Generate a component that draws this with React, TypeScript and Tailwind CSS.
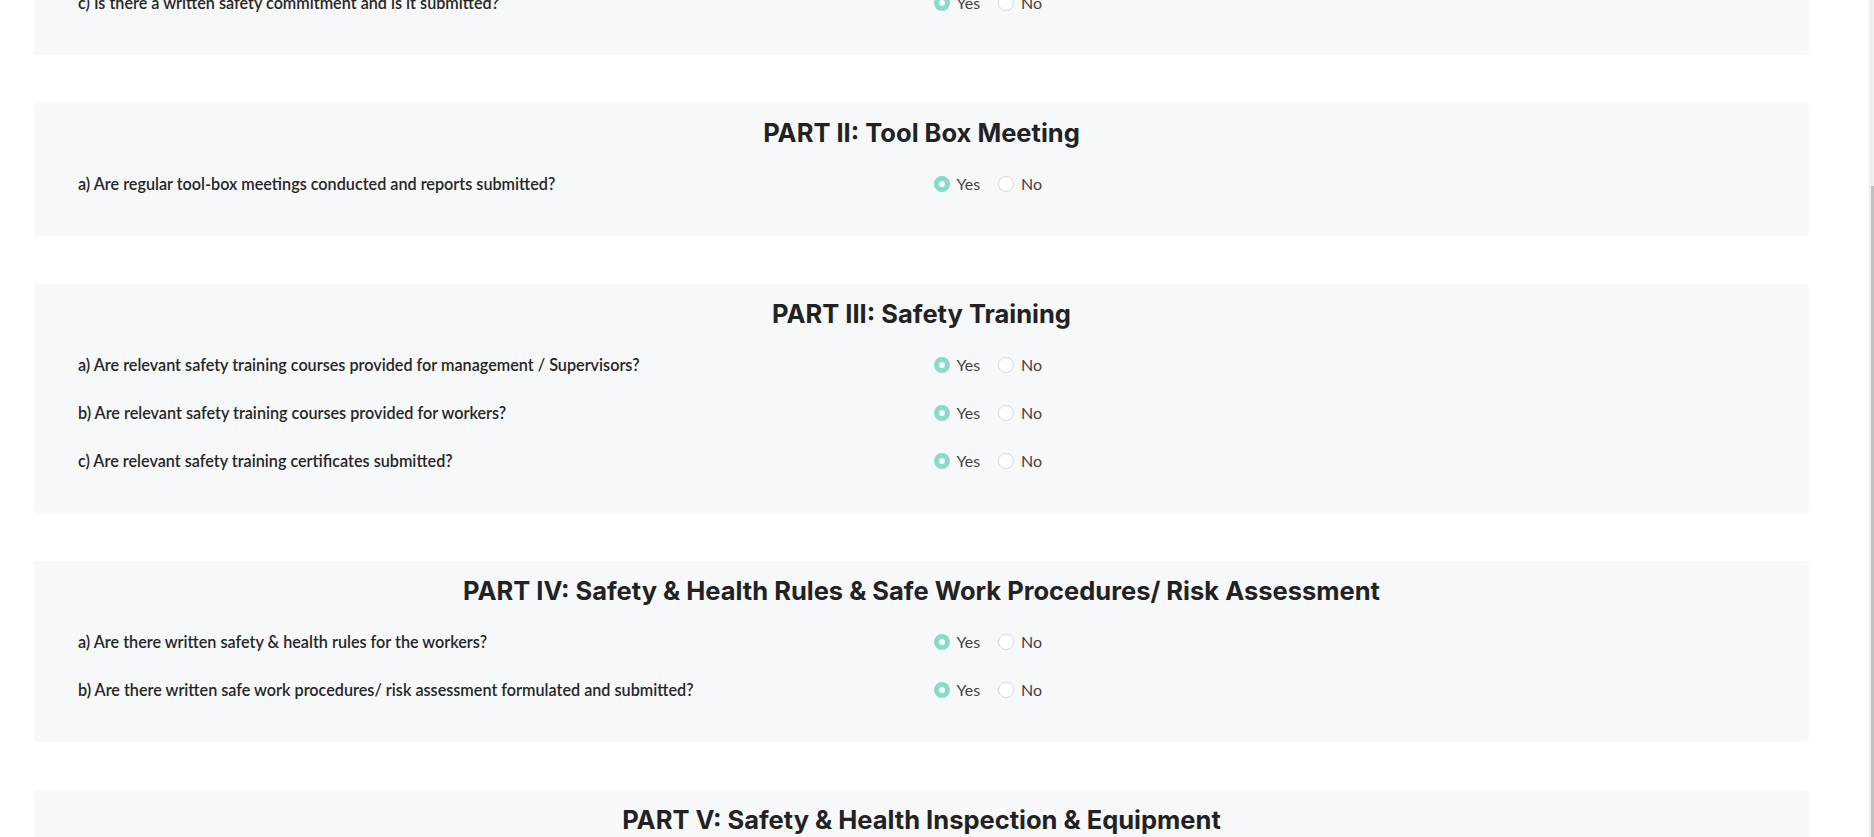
import React from "react";

type Part = { title: string; questions: string[] };

const parts: Part[] = [
  {
    title: "PART I: Safety Policy",
    questions: [
      "a) Is there a written safety policy and is it submitted?",
      "b) Is there a written safety organisation chart and is it submitted?",
      "c) Is there a written safety commitment and is it submitted?",
    ],
  },
  {
    title: "PART II: Tool Box Meeting",
    questions: ["a) Are regular tool-box meetings conducted and reports submitted?"],
  },
  {
    title: "PART III: Safety Training",
    questions: [
      "a) Are relevant safety training courses provided for management / Supervisors?",
      "b) Are relevant safety training courses provided for workers?",
      "c) Are relevant safety training certificates submitted?",
    ],
  },
  {
    title: "PART IV: Safety & Health Rules & Safe Work Procedures/ Risk Assessment",
    questions: [
      "a) Are there written safety & health rules for the workers?",
      "b) Are there written safe work procedures/ risk assessment formulated and submitted?",
    ],
  },
  {
    title: "PART V: Safety & Health Inspection & Equipment",
    questions: [
      "a) Are regular safety & health inspections conducted?",
      "b) Are safety equipment provided for the workers?",
    ],
  },
];

function Radio({ checked, label }: { checked: boolean; label: string }) {
  return (
    <label className="flex items-center gap-[7px]">
      {checked ? (
        <span className="box-border h-4 w-4 rounded-full border-[5px] border-[#84dcc9] bg-white" />
      ) : (
        <span className="box-border h-4 w-4 rounded-full border border-[#d9d9d9] bg-white" />
      )}
      <span className="text-[16px] text-[#444444]">{label}</span>
    </label>
  );
}

function Card({ part }: { part: Part }) {
  return (
    <section className="w-[1775px] rounded bg-[#f7f8fa] px-11 pt-[15px] pb-[28px]">
      <h2
        className="h-[30px] text-center text-[25.5px] leading-[30px] font-bold text-[#222222]"
        style={{ fontFamily: "Inter, 'Open Sans', sans-serif" }}
      >
        {part.title}
      </h2>
      <div className="mt-[12px] flex flex-col">
        {part.questions.map((q) => (
          <div key={q} className="grid h-12 grid-cols-2 items-center gap-6">
            <div className="text-[16.2px] font-semibold text-[#262626]">{q}</div>
            <div className="flex items-center gap-[18px]">
              <Radio checked label="Yes" />
              <Radio checked={false} label="No" />
            </div>
          </div>
        ))}
      </div>
    </section>
  );
}

export default function App() {
  return (
    <div
      className="relative h-[837px] w-[1874px] overflow-hidden bg-white"
      style={{ fontFamily: "Lato, 'Open Sans', sans-serif" }}
    >
      <div className="-mt-[174px] flex w-[1869px] flex-col gap-12 pl-[34px]">
        {parts.map((p) => (
          <Card key={p.title} part={p} />
        ))}
      </div>
      <div className="absolute top-0 right-0 h-[837px] w-[5px] bg-[#efefef]">
        <div className="absolute top-[186px] right-0 h-[651px] w-[3px] bg-[#c1c1c1]" />
      </div>
    </div>
  );
}
